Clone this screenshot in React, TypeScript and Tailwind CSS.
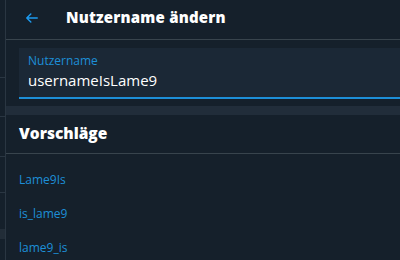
import React from "react";

export default function App() {
  const font = { fontFamily: '"Open Sans", "Noto Sans", sans-serif' };
  return (
    <div className="w-[400px] h-[260px] flex bg-[#15202b] overflow-hidden" style={font}>
      <div className="w-[6px] shrink-0 border-r border-[#2a3642] bg-[#15202b] flex flex-col">
        <div className="h-[78px] border-b border-[#2a3642]" />
        <div className="h-[39px] border-b border-[#2a3642]" />
        <div className="h-[40px] border-b border-[#2a3642]" />
        <div className="h-[36px] border-b border-[#2a3642]" />
        <div className="h-[36px]" />
        <div className="h-[10px] bg-[#222d38]" />
      </div>
      <div className="flex-1 flex flex-col">
        <div className="h-[40px] shrink-0 flex items-center border-b border-[#38444d]">
          <svg width="14" height="14" viewBox="0 0 24 24" className="ml-[19px] mt-[-3px]" fill="none" stroke="#1d9bf0" strokeWidth="2.4" strokeLinecap="round" strokeLinejoin="round">
            <path d="M21 12H3M10 5l-7 7 7 7" />
          </svg>
          <span className="ml-[27px] mt-[-4px] text-white font-extrabold text-[15px] tracking-[0.2px]">Nutzername ändern</span>
        </div>
        <div className="pt-[8px] pl-[13px] pb-[7px]">
          <div className="h-[51px] bg-[#1b2836] border-b-2 border-[#1d8fd8] pl-[9px] pt-[5px] flex flex-col">
            <span className="text-[12px] leading-[16px] text-[#1d8fd8]">Nutzername</span>
            <span className="text-[15px] leading-[22px] text-white">usernameIsLame9</span>
          </div>
        </div>
        <div className="h-[9px] shrink-0 bg-[#212d3a]" />
        <div className="h-[39px] shrink-0 flex items-center pl-[13px] border-b border-[#38444d]">
          <span className="text-[15.5px] font-extrabold text-white">Vorschläge</span>
        </div>
        <div className="flex flex-col pl-[13px] pt-[17px] gap-[17px] text-[12px] leading-[17px] text-[#1d8fd8]">
          <span>Lame9Is</span>
          <span>is_lame9</span>
          <span>lame9_is</span>
        </div>
      </div>
    </div>
  );
}
